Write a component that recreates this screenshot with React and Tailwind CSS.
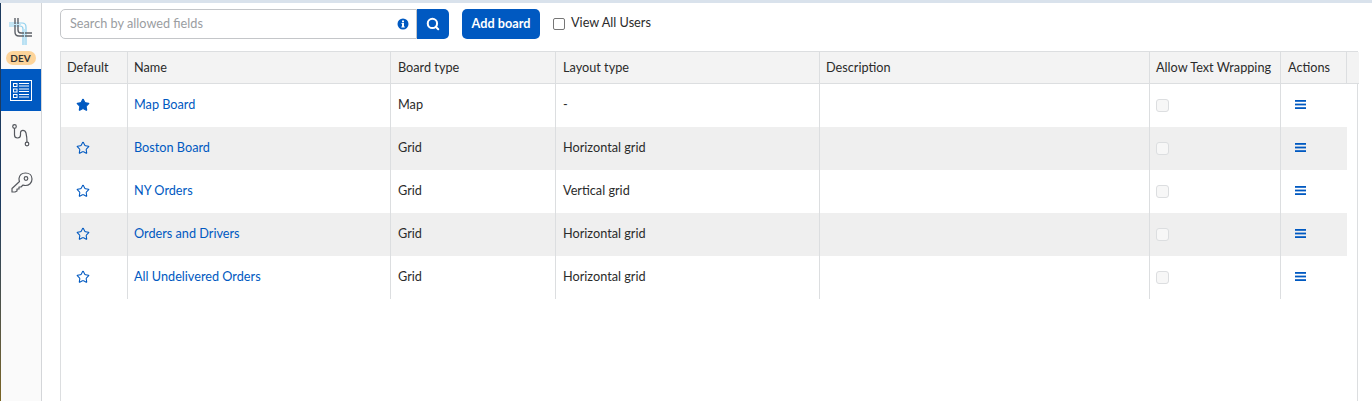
import { Search, Star } from "lucide-react";

const rows = [
  { name: "Map Board", board: "Map", layout: "-", isDefault: true },
  { name: "Boston Board", board: "Grid", layout: "Horizontal grid" },
  { name: "NY Orders", board: "Grid", layout: "Vertical grid" },
  { name: "Orders and Drivers", board: "Grid", layout: "Horizontal grid" },
  { name: "All Undelivered Orders", board: "Grid", layout: "Horizontal grid" },
];

const cols = "grid grid-cols-[67px_263px_165px_264px_330px_131px_66px]";

function Logo() {
  return (
    <svg width="30" height="30" viewBox="0 0 30 30" fill="none" className="block">
      <path d="M2 6H15Q19 6 19 10V28M2 9H13Q16 9 16 12V28" stroke="#8fd0ee" strokeWidth="1.2" />
      <path d="M8 1V15Q8 19 12 19H25M11 1V13Q11 16 14 16H25" stroke="#5d6168" strokeWidth="1.4" />
      <path d="M2 7.500H14M17.500 12V28" stroke="#c4e6f5" strokeWidth="1" />
    </svg>
  );
}

function BoardsIcon() {
  return (
    <svg width="22" height="21" viewBox="0 0 22 21" fill="none" stroke="#fff" strokeWidth="1">
      <rect x="0.5" y="0.5" width="21" height="20" />
      <rect x="3.5" y="3.5" width="3.5" height="3" />
      <rect x="3.5" y="9" width="3.5" height="3" />
      <rect x="3.5" y="14.5" width="3.5" height="3" />
      <path d="M9 3.500H19M9 6H19M9 9H19M9 11.500H19M9 14.500H19M9 17H19" />
    </svg>
  );
}

function RouteIcon() {
  return (
    <svg width="18" height="23" viewBox="0 0 18 23" fill="none" stroke="#55585e" strokeWidth="1.2">
      <circle cx="2.500" cy="2.500" r="1.800" />
      <circle cx="15" cy="20" r="1.800" />
      <path d="M2.500 4.300V11C2.500 15 8.500 15 8.500 11V9C8.500 5.500 13 5.500 14 9C14.700 12 15 15 15 18.200" />
    </svg>
  );
}

function KeyIcon() {
  return (
    <svg width="22" height="21" viewBox="0 0 22 21" fill="none" stroke="#55585e" strokeWidth="1.200" strokeLinejoin="round">
      <path d="M8 6.500C8.500 3 11 1 14.500 1C18.500 1 21 3.500 21 7C21 11 18 13.500 14.500 13.500C13.500 13.500 12.500 13.300 12 13L10 15H8V17H6V19L4 20H1V16.500L8.500 9.500C8 8.500 8 7.500 8 6.500Z" />
      <circle cx="15" cy="6.500" r="1.800" />
    </svg>
  );
}

function InfoDot() {
  return (
    <svg width="12" height="12" viewBox="0 0 12 12">
      <circle cx="6" cy="6" r="5.500" fill="#0059c1" />
      <rect x="5" y="2.500" width="2" height="1.800" fill="#fff" />
      <path d="M4.500 5H7V8.500H7.800V9.500H4.300V8.500H5V6H4.500Z" fill="#fff" />
    </svg>
  );
}

function Bars() {
  return (
    <svg width="11" height="9" viewBox="0 0 11 9" fill="#0059c1">
      <rect width="11" height="1.800" />
      <rect y="3.600" width="11" height="1.800" />
      <rect y="7.200" width="11" height="1.800" />
    </svg>
  );
}

function Sidebar() {
  return (
    <aside className="w-[41px] shrink-0 bg-[#fafafa] border-r border-[#d4d6d9] flex flex-col items-stretch">
      <div className="h-[48px] pl-[6px] pt-[14px]">
        <Logo />
      </div>
      <div className="flex justify-center h-[18px] pr-[1px]">
        <span className="w-[30px] h-[14px] rounded-full bg-[#fdd49a] text-[10px] leading-[14px] font-bold text-center text-[#333]">DEV</span>
      </div>
      <div className="h-[42px] bg-[#0059c1] flex items-center justify-center">
        <BoardsIcon />
      </div>
      <div className="h-[46px] pl-[11px] pt-[13px]">
        <RouteIcon />
      </div>
      <div className="pl-[10px] pt-[15px]">
        <KeyIcon />
      </div>
    </aside>
  );
}

function Toolbar() {
  return (
    <div className="h-[30px] flex items-center">
      <div className="w-[357px] h-[30px] flex items-center justify-between pl-[9px] pr-[7px] border border-[#c4c6c9] rounded-l-[5px] bg-white">
        <span className="text-[12.700px] text-[#9a9da1]">Search by allowed fields</span>
        <InfoDot />
      </div>
      <button className="w-[32px] h-[30px] bg-[#0059c1] rounded-r-[5px] flex items-center justify-center">
        <Search size={14} stroke="#fff" strokeWidth={3.500} />
      </button>
      <button className="ml-[13px] w-[78px] h-[30px] bg-[#0059c1] rounded-[5px] text-white text-[12.700px] font-bold">Add board</button>
      <label className="ml-[13px] flex items-center gap-[6px] text-[12.700px] text-[#2b2b2b] -mt-[2px]">
        <span className="w-[12px] h-[12px] mt-[2px] border border-[#767676] rounded-[2px] bg-white" />
        View All Users
      </label>
    </div>
  );
}

function Head({ children, wide }) {
  return <div className={`border-r border-[#dcdee0] pt-[1px] flex items-center ${wide ? "pl-[7px]" : "pl-[6px]"}`}>{children}</div>;
}

function BoardRow({ row, shaded }) {
  const cell = "border-r border-[#dcdee0] flex items-center pl-[6px] h-[43px] pb-[1px]";
  const wideCell = "border-r border-[#dcdee0] flex items-center pl-[7px] h-[43px] pb-[1px]";
  return (
    <div className={`${cols} ${shaded ? "bg-[#efefef]" : ""} w-[1286px] text-[12.700px] text-[#2b2b2b]`}>
      <div className="border-r border-[#dcdee0] flex items-center pl-[15px] pb-[2px] h-[43px]">
        <Star size={14} stroke="#0059c1" strokeWidth={1.800} fill={row.isDefault ? "#0059c1" : "none"} />
      </div>
      <div className={`${cell} text-[#0059c1]`}>{row.name}</div>
      <div className={wideCell}>{row.board}</div>
      <div className={wideCell}>{row.layout}</div>
      <div className={cell} />
      <div className={cell}>
        <span className="w-[13px] h-[13px] rounded-[3px] border border-[#dcdee0] bg-[#f7f7f7]" />
      </div>
      <div className="flex items-center pl-[14px] pb-[2px] h-[43px]">
        <Bars />
      </div>
    </div>
  );
}

export default function App() {
  return (
    <div className="h-[401px] w-[1372px] overflow-hidden bg-white font-['Lato','Open_Sans',sans-serif]">
      <div className="h-[3px] bg-[#d9e2ec]" />
      <div className="flex h-[398px]">
        <div className="w-px shrink-0 bg-gradient-to-b from-[#1c3a5e] via-[#1c3a5e] to-[#7a6420]" />
        <Sidebar />
        <main className="flex-1 pl-[18px] pt-[6px]">
          <Toolbar />
          <div className="mt-[12px] w-[1298px] h-[400px] border-x border-t border-[#dcdee0]">
            <div className={`${cols} w-[1298px] h-[32px] bg-[#f3f3f3] border-b border-[#dcdee0] text-[12.700px] text-[#2b2b2b]`}>
              <Head>Default</Head>
              <Head>Name</Head>
              <Head wide>Board type</Head>
              <Head wide>Layout type</Head>
              <Head>Description</Head>
              <Head>Allow Text Wrapping</Head>
              <Head wide>Actions</Head>
            </div>
            {rows.map((row, i) => (
              <BoardRow key={row.name} row={row} shaded={i % 2 === 1} />
            ))}
          </div>
        </main>
      </div>
    </div>
  );
}
